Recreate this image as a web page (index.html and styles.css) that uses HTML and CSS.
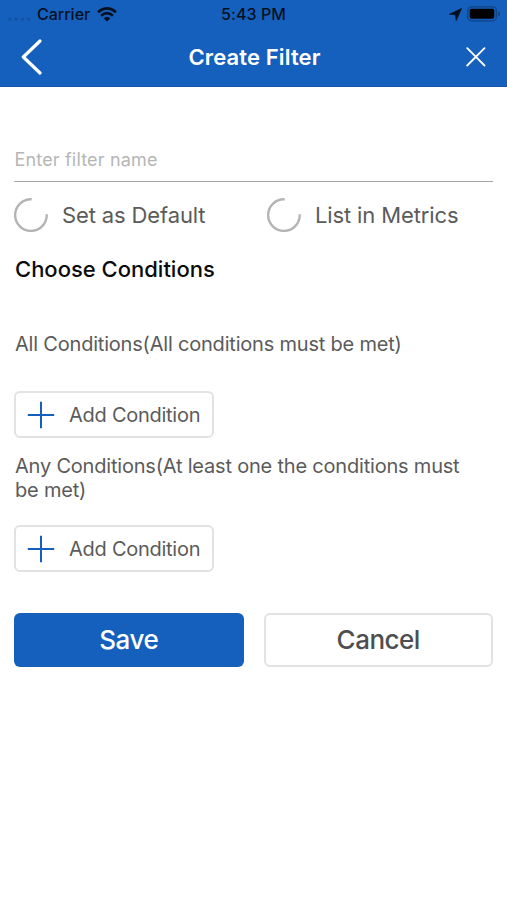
FILE: index.html
```html
<!DOCTYPE html>
<html lang="en">
<head>
<meta charset="utf-8">
<title>Create Filter</title>
<link rel="stylesheet" href="styles.css">
</head>
<body>
<header class="header">
  <div class="status">
    <div class="status-left">
      <svg class="signal" width="24" height="4" viewBox="0 0 24 4"><circle cx="2" cy="2" r="1.6"/><circle cx="8.2" cy="2" r="1.6"/><circle cx="14.4" cy="2" r="1.6"/><circle cx="20.6" cy="2" r="1.6"/></svg>
      <span class="carrier">Carrier</span>
      <svg class="wifi" width="20" height="15" viewBox="0 0 20 15"><g fill="none" stroke="#04101f" stroke-width="2.7"><path d="M1 5.2Q10-2.4 19 5.2"/><path d="M4.1 8.7Q10 3.6 15.9 8.7"/></g><path d="M6.6 11.2Q10 8.2 13.4 11.2L10 14.6Z" fill="#04101f"/></svg>
    </div>
    <span class="time">5:43 PM</span>
    <div class="status-right">
      <svg width="13" height="13" viewBox="0 0 13 13"><path d="M12.5.5L7.2 12.7L6.4 6.8L.4 6.2Z" fill="#04101f" stroke="#04101f" stroke-width=".7" stroke-linejoin="round"/></svg>
      <svg class="battery" width="34" height="16" viewBox="0 0 34 16"><rect x=".8" y=".8" width="28.6" height="14" rx="4" fill="none" stroke="#0f4384" stroke-width="1.3"/><rect x="2.7" y="2.8" width="24.6" height="10" rx="2" fill="#000"/><path d="M31 5.3Q33 6 33 7.8T31 10.3Z" fill="#0f4384"/></svg>
    </div>
  </div>
  <div class="nav">
    <svg width="22" height="36" viewBox="0 0 22 36"><path d="M19 2L2.3 18L19 34" fill="none" stroke="#fff" stroke-width="3.2" stroke-linecap="round" stroke-linejoin="round"/></svg>
    <h1 class="title">Create Filter</h1>
    <svg class="close" width="20" height="20" viewBox="0 0 20 20"><path d="M1.2 1.2L18.5 18.5M18.5 1.2L1.2 18.5" stroke="#fff" stroke-width="1.8" stroke-linecap="round"/></svg>
  </div>
</header>
<main class="form">
  <div class="name"><input class="name-input" type="text" placeholder="Enter filter name"></div>
  <div class="options">
    <label class="option"><svg width="34" height="34" viewBox="0 0 34 34"><path d="M17.7 1.3A15.8 15.8 0 1 0 32.7 16.2" fill="none" stroke="#b4b4b4" stroke-width="2.4"/></svg><span>Set as Default</span></label>
    <label class="option"><svg width="34" height="34" viewBox="0 0 34 34"><path d="M17.7 1.3A15.8 15.8 0 1 0 32.7 16.2" fill="none" stroke="#b4b4b4" stroke-width="2.4"/></svg><span>List in Metrics</span></label>
  </div>
  <h2 class="heading">Choose Conditions</h2>
  <p class="group group-all">All Conditions(All conditions must be met)</p>
  <button class="add"><svg width="28" height="28" viewBox="0 0 28 28"><path d="M14 .8V27.2M.8 14H27.2" stroke="#1560bd" stroke-width="2"/></svg><span>Add Condition</span></button>
  <p class="group group-any">Any Conditions(At least one the conditions must<br>be met)</p>
  <button class="add"><svg width="28" height="28" viewBox="0 0 28 28"><path d="M14 .8V27.2M.8 14H27.2" stroke="#1560bd" stroke-width="2"/></svg><span>Add Condition</span></button>
  <div class="actions">
    <button class="action save">Save</button>
    <button class="action cancel">Cancel</button>
  </div>
</main>
</body>
</html>
```
FILE: styles.css
```css
* { box-sizing: border-box; }
body { margin: 0; background: #fff; color: #5b5b5b; font-family: Inter, "Liberation Sans", sans-serif; }
svg { display: block; flex: none; }
button { font-family: inherit; margin: 0; }
.header { height: 87px; background: #1560bd; border-bottom: 1px solid #1357ab; }
.status { height: 28px; display: grid; grid-template-columns: 1fr auto 1fr; align-items: center; padding: 0 8px; color: #04101f; font-size: 16px; font-weight: 500; }
.status-left { display: flex; align-items: center; }
.signal { fill: #16509a; margin: 9px 5px 0 0; }
.wifi { margin-left: 7px; }
.time { letter-spacing: 0.1px; }
.status-right { display: flex; align-items: center; justify-content: flex-end; gap: 5px; margin-right: -2px; }
.nav { height: 58px; display: flex; align-items: center; justify-content: space-between; padding: 0 21px; }
.title { margin: 0; font-size: 22px; font-weight: 600; color: #fff; letter-spacing: 0.13px; line-height: 28px; }
.form { padding: 0 14px; }
.name { height: 95px; border-bottom: 1px solid #a6a6a6; padding-top: 59px; }
.name-input { display: block; width: 100%; height: 26px; padding: 0 0.5px; border: 0; outline: 0; background: none; font: 18px Inter, "Liberation Sans", sans-serif; letter-spacing: 0.17px; }
.name-input::placeholder { color: #b6b6b6; opacity: 1; }
.options { display: grid; grid-template-columns: 253px 1fr; height: 66px; align-items: center; }
.option { display: flex; align-items: center; gap: 14px; font-size: 22px; letter-spacing: -0.13px; }
.heading { margin: 7px 0 0 1px; font-size: 22px; line-height: 28px; font-weight: 500; color: #0b0b0b; }
.group { margin: 0 0 0 1px; font-size: 20px; line-height: 24px; white-space: nowrap; letter-spacing: -0.2px; }
.group-all { padding: 49px 0 35px; }
.group-any { padding: 16px 0 23px; }
.add { width: 200px; height: 47px; border: 2px solid #e2e2e2; border-radius: 6px; background: #fff; padding: 0 0 0 11px; display: flex; align-items: center; gap: 14px; font-size: 20px; letter-spacing: -0.26px; color: #5b5b5b; }
.actions { display: grid; grid-template-columns: 1fr 1fr; gap: 20px; margin-top: 41px; }
.action { height: 54px; border-radius: 6px; font-size: 26px; font-weight: 500; padding: 0 0 1px; letter-spacing: -0.5px; }
.save { border: 0; background: #1560bd; color: #fff; }
.cancel { border: 2px solid #e2e2e2; background: #fff; color: #4e4e4e; }
```
